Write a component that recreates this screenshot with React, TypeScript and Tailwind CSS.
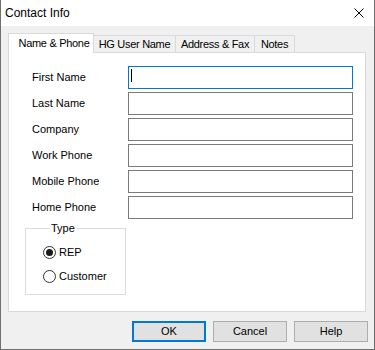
import React from "react";

const font = { fontFamily: '"Liberation Sans", Arial, sans-serif' };

function Field({ label, focused }: { label: string; focused?: boolean }) {
  return (
    <div className="flex items-center h-[23px]">
      <div className="w-[103px] pl-[7px] text-[11px] leading-[13px] text-black">{label}</div>
      <div
        className={
          "w-[225px] h-[23px] bg-white border flex items-start " +
          (focused ? "border-[#0078d7]" : "border-[#7a7a7a]")
        }
      >
        {focused ? <div className="ml-[2px] mt-[2px] w-[1px] h-[13px] bg-black" /> : null}
      </div>
    </div>
  );
}

function Radio({ label, checked }: { label: string; checked?: boolean }) {
  return (
    <div className="flex items-center h-[24px] gap-[3px]">
      <div className="w-[13px] h-[13px] rounded-full border border-[#333333] bg-white flex items-center justify-center">
        {checked ? <div className="w-[7px] h-[7px] rounded-full bg-[#1a1a1a]" /> : null}
      </div>
      <span className="text-[11px] leading-[13px] text-black">{label}</span>
    </div>
  );
}

function Button({ label, isDefault }: { label: string; isDefault?: boolean }) {
  return (
    <div
      className={
        "w-[74px] h-[21px] bg-[#e1e1e1] flex items-center justify-center text-[11px] leading-[13px] text-black " +
        (isDefault ? "border-2 border-[#0078d7]" : "border border-[#adadad]")
      }
    >
      {label}
    </div>
  );
}

export default function App() {
  return (
    <div
      className="w-[375px] h-[350px] border-l border-r border-b border-[#6f6f6f] flex flex-col bg-[#f0f0f0] overflow-hidden"
      style={font}
    >
      {/* Title bar */}
      <div className="h-[26px] bg-white flex items-center justify-between pl-[4px] shrink-0">
        <span className="text-[12px] leading-[14px] text-black">Contact Info</span>
        <svg width="10" height="10" viewBox="0 0 10 10" className="mr-[10px] mb-[1px]">
          <path d="M0.5 0.5 L9.5 9.5 M9.5 0.5 L0.5 9.5" stroke="#000" strokeWidth="1" fill="none" />
        </svg>
      </div>

      {/* Body */}
      <div className="flex-1 flex flex-col pl-[7px] pr-[6px]">
        {/* Tabs */}
        <div className="h-[26px] flex items-end shrink-0 text-[11px] leading-[13px] tracking-[-0.3px] text-black">
          <div className="relative z-10 w-[86px] h-[20px] -mb-[1px] bg-white border-t border-l border-r border-[#d9d9d9] flex items-start justify-center pt-[3px] pl-[6px]">
            Name &amp; Phone
          </div>
          <div className="w-[82px] h-[17px] border-t border-r border-[#d9d9d9] flex items-center justify-center pt-[1px]">
            HG User Name
          </div>
          <div className="w-[79px] h-[17px] border-t border-r border-[#d9d9d9] flex items-center justify-center pt-[1px]">
            Address &amp; Fax
          </div>
          <div className="w-[40px] h-[17px] border-t border-r border-[#d9d9d9] flex items-center justify-center pt-[1px]">
            Notes
          </div>
        </div>

        {/* Panel */}
        <div className="w-[358px] h-[260px] bg-white border border-[#d9d9d9] pt-[13px] pl-[16px] flex flex-col shrink-0">
          <div className="flex flex-col gap-[3px]">
            <Field label="First Name" focused />
            <Field label="Last Name" />
            <Field label="Company" />
            <Field label="Work Phone" />
            <Field label="Mobile Phone" />
            <Field label="Home Phone" />
          </div>
          <fieldset className="mt-[3px] w-[101px] border border-[#dcdcdc] pl-[18px]">
            <legend className="ml-[6px] px-[1px] text-[11px] leading-[13px] text-black">Type</legend>
            <div className="pt-[5px] pb-[6px] -ml-[1px]">
              <Radio label="REP" checked />
              <Radio label="Customer" />
            </div>
          </fieldset>
        </div>

        {/* Buttons */}
        <div className="mt-[9px] flex justify-end gap-[7px]">
          <Button label="OK" isDefault />
          <Button label="Cancel" />
          <Button label="Help" />
        </div>
      </div>
    </div>
  );
}
